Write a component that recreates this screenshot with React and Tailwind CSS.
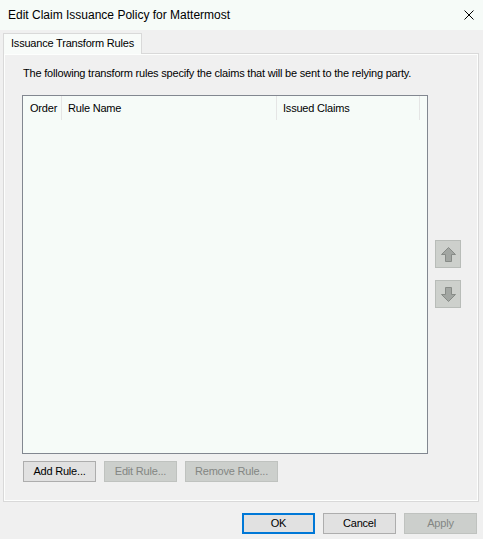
import React from "react";

function Arrow({ down }) {
  return (
    <svg width="15" height="15" viewBox="0 0 15 15" className={down ? "rotate-180" : ""}>
      <polygon
        points="7.5,0.5 14.5,7.5 10.5,7.5 10.5,14.5 4.5,14.5 4.5,7.5 0.5,7.5"
        fill="#a2a6a2"
        stroke="#878b87"
        strokeWidth="1"
        strokeLinejoin="miter"
      />
    </svg>
  );
}

function Btn({ children, disabled, primary, className = "" }) {
  const base = "h-[21px] w-[73px] flex items-center justify-center leading-none";
  if (disabled)
    return (
      <div className={`${base} bg-[#cccfcc] border border-[#bfc2bf] text-[#838683] ${className}`}>{children}</div>
    );
  if (primary)
    return (
      <div className={`${base} bg-[#e1e1e1] border-2 border-[#0078d7] text-black ${className}`}>{children}</div>
    );
  return (
    <div className={`${base} bg-[#e1e1e1] border border-[#adadad] text-black ${className}`}>{children}</div>
  );
}

export default function App() {
  return (
    <div className="w-[483px] h-[539px] flex flex-col bg-[#f0f0f0] overflow-hidden text-black font-['Liberation_Sans',Arial,sans-serif] text-[11px] tracking-[-0.2px]">
      {/* Title bar */}
      <div className="h-[30px] shrink-0 bg-[#f6fbf8] flex items-center justify-between pl-[8px] pr-[9px]">
        <span className="text-[12px] tracking-normal">Edit Claim Issuance Policy for Mattermost</span>
        <svg width="10" height="10" viewBox="0 0 10 10">
          <path d="M0.5 0.5 L9.5 9.5 M9.5 0.5 L0.5 9.5" stroke="#000" strokeWidth="1" />
        </svg>
      </div>

      {/* Body */}
      <div className="flex-1 flex flex-col pt-[3px] pl-[3px] pr-[4px]">
        {/* Tab strip */}
        <div className="flex">
          <div className="relative z-10 -mb-[1px] h-[21px] w-[139px] border border-b-0 border-[#d9d9d9] bg-[#f8fbf9] pl-[7px] pb-[2px] flex items-center">
            Issuance Transform Rules
          </div>
        </div>

        {/* Panel */}
        <div className="h-[449px] border border-[#d9d9d9] shadow-[inset_0_0_0_1px_#fdfefd] flex flex-col pl-[18px] pt-[13px]">
          <div className="h-[13px] leading-[13px] ml-[1px]">
            The following transform rules specify the claims that will be sent to the relying party.
          </div>

          <div className="mt-[15px] flex">
            {/* List */}
            <div className="w-[406px] h-[359px] border border-[#828790] bg-[#f6fbf8] flex flex-col">
              <div className="h-[24px] flex leading-[13px]">
                <div className="w-[39px] border-r border-[#e5e5e5] pl-[7px] pt-[1px] flex items-center">Order</div>
                <div className="w-[215px] border-r border-[#e5e5e5] pl-[6px] pt-[1px] flex items-center">Rule Name</div>
                <div className="w-[143px] border-r border-[#e5e5e5] pl-[6px] pt-[1px] flex items-center">Issued Claims</div>
              </div>
            </div>

            {/* Move buttons */}
            <div className="ml-[7px] flex flex-col justify-center gap-[12px] pb-[1px]">
              <div className="w-[26px] h-[28px] bg-[#cdd0cc] border border-[#b8bcb8] flex items-center justify-center">
                <Arrow />
              </div>
              <div className="w-[26px] h-[28px] bg-[#cdd0cc] border border-[#b8bcb8] flex items-center justify-center">
                <Arrow down />
              </div>
            </div>
          </div>

          <div className="mt-[7px] ml-[1px] flex gap-[8px]">
            <Btn>Add Rule...</Btn>
            <Btn disabled>Edit Rule...</Btn>
            <Btn disabled className="w-[93px]">Remove Rule...</Btn>
          </div>
        </div>

        {/* Dialog buttons */}
        <div className="mt-[11px] pr-[2px] flex justify-end gap-[8px]">
          <Btn primary>OK</Btn>
          <Btn>Cancel</Btn>
          <Btn disabled>Apply</Btn>
        </div>
      </div>
    </div>
  );
}
